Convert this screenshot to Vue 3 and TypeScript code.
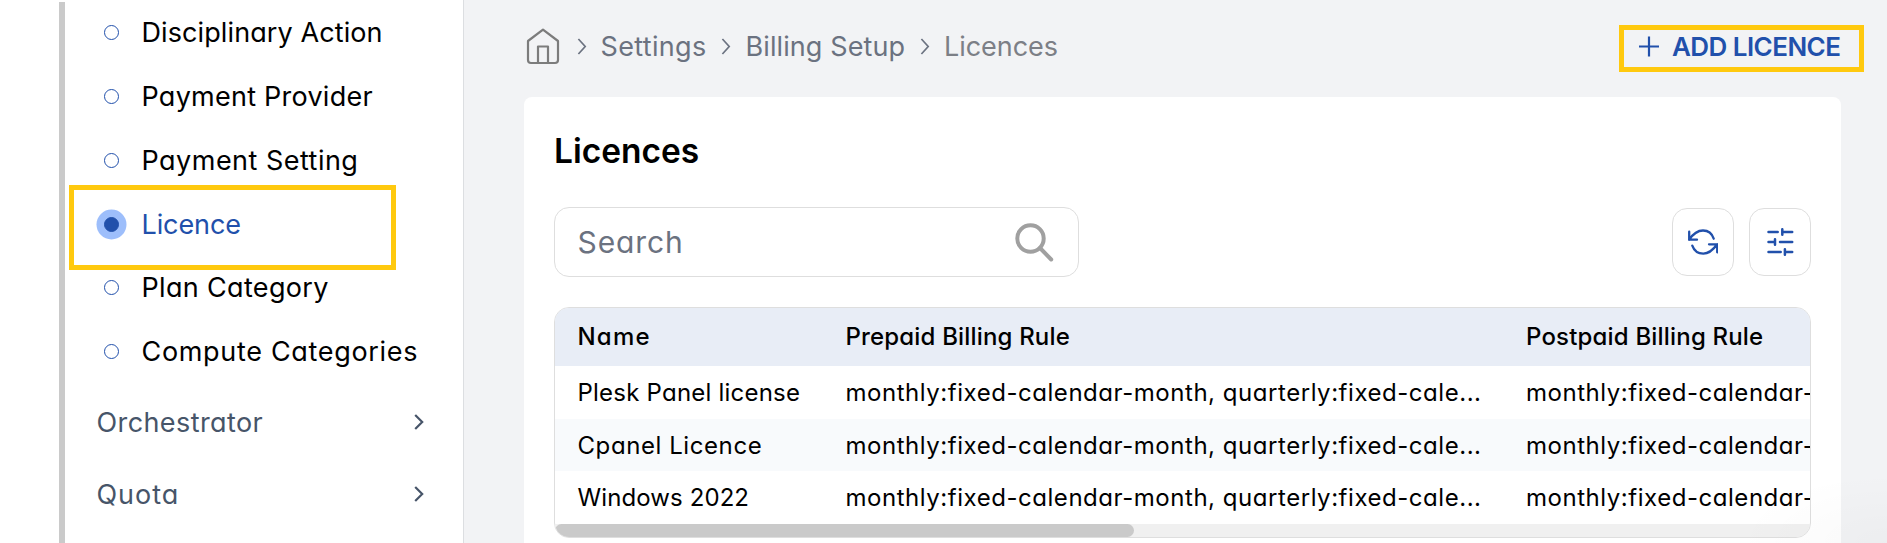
<script setup lang="ts">
interface Label {
  text: string
  spacing: number
}

interface MenuEntry extends Label {
  active?: boolean
}

interface LicenceRow {
  name: Label
  prepaid: string
  postpaid: string
}

const entries: MenuEntry[] = [
  { text: 'Disciplinary Action', spacing: 0.1 },
  { text: 'Payment Provider', spacing: 0.25 },
  { text: 'Payment Setting', spacing: 0.48 },
  { text: 'Licence', spacing: -0.1, active: true },
  { text: 'Plan Category', spacing: 0.33 },
  { text: 'Compute Categories', spacing: 0.68 },
]

const groups: Label[] = [
  { text: 'Orchestrator', spacing: 0.4 },
  { text: 'Quota', spacing: 0.95 },
]

const crumbs: Label[] = [
  { text: 'Settings', spacing: 0.33 },
  { text: 'Billing Setup', spacing: 0.1 },
  { text: 'Licences', spacing: -0.05 },
]

const columns: Label[] = [
  { text: 'Name', spacing: 1.2 },
  { text: 'Prepaid Billing Rule', spacing: 0.17 },
  { text: 'Postpaid Billing Rule', spacing: 0.18 },
]

const rule = 'monthly:fixed-calendar-month, quarterly:fixed-cale...'

const rows: LicenceRow[] = [
  { name: { text: 'Plesk Panel license', spacing: 0.22 }, prepaid: rule, postpaid: rule },
  { name: { text: 'Cpanel Licence', spacing: 0.58 }, prepaid: rule, postpaid: rule },
  { name: { text: 'Windows 2022', spacing: 0.1 }, prepaid: rule, postpaid: rule },
]

const track = (label: Label) => ({ letterSpacing: `${label.spacing}px` })
</script>

<template>
  <div class="page">
    <aside class="sidebar">
      <div class="rail"></div>
      <nav class="menu">
        <a v-for="entry in entries" :key="entry.text" class="entry" :class="{ active: entry.active }">
          <span class="bullet"></span>
          <span class="entry-text" :style="track(entry)">{{ entry.text }}</span>
          <span v-if="entry.active" class="marker"></span>
        </a>
        <div class="groups">
          <a v-for="group in groups" :key="group.text" class="group">
            <span :style="track(group)">{{ group.text }}</span>
            <svg class="group-arrow" viewBox="0 0 10 16"><path d="M1.2 1l7 7-7 7" /></svg>
          </a>
        </div>
      </nav>
    </aside>

    <main class="main">
      <header class="topbar">
        <div class="crumbs">
          <svg class="home" viewBox="0 0 34 37">
            <path d="M17 1.600L2 13V32a3 3 0 0 0 3 3h24a3 3 0 0 0 3-3V13z" />
            <path d="M12 35V18.500h10V35" />
          </svg>
          <template v-for="crumb in crumbs" :key="crumb.text">
            <svg class="crumb-arrow" viewBox="0 0 10 17"><path d="M1.400 1l6.800 7.500-6.800 7.500" /></svg>
            <span class="crumb" :style="track(crumb)">{{ crumb.text }}</span>
          </template>
        </div>
        <button class="add">
          <svg class="plus" viewBox="0 0 20 21"><path d="M0 10.500h20M10 .5v20" /></svg>
          <span class="add-text">ADD LICENCE</span>
        </button>
      </header>

      <section class="card">
        <h1 class="title">Licences</h1>
        <div class="tools">
          <div class="search">
            <span class="placeholder">Search</span>
            <svg class="lens" viewBox="0 0 40 40">
              <circle cx="16.500" cy="16.500" r="13.200" />
              <path d="M26 26l11.200 11.500" />
            </svg>
          </div>
          <div class="actions">
            <button class="tool">
              <svg class="refresh" viewBox="0 0 30 26">
                <path d="M1.200 2.700v8H9M1.200 10.700C5 5 9.500 1.500 15 1.500c5 0 9 3 10.700 8.200" />
                <path d="M21 15.300h8.200v8M29.200 15.300C25 21 20.500 24.700 15.300 24.700c-5 0-9.300-3.200-11-8" />
              </svg>
            </button>
            <button class="tool">
              <svg class="sliders" viewBox="0 0 28 28">
                <path d="M2.500 4h9.200M17 4h9.200M16.300 1.200v5.600" />
                <path d="M2.500 14H9M14 14h12.200M9 11.200v5.600" />
                <path d="M2.500 24h12.200M19 24h7.200M18.900 21.200v5.600" />
              </svg>
            </button>
          </div>
        </div>

        <div class="table">
          <div class="row head">
            <span v-for="column in columns" :key="column.text" :style="track(column)">{{ column.text }}</span>
          </div>
          <div v-for="row in rows" :key="row.name.text" class="row">
            <span :style="track(row.name)">{{ row.name.text }}</span>
            <span class="rule">{{ row.prepaid }}</span>
            <span class="rule">{{ row.postpaid }}</span>
          </div>
          <div class="scroll"><div class="thumb"></div></div>
        </div>
      </section>
      <div class="glow"></div>
    </main>
  </div>
</template>

<style>
body {
  margin: 0;
}
</style>

<style scoped>
.page {
  display: flex;
  width: 1887px;
  height: 543px;
  overflow: hidden;
  background: #fff;
  font-family: Inter, "Open Sans", sans-serif;
  font-feature-settings: "cv11";
  color: #000;
  white-space: nowrap;
}

.page * {
  box-sizing: border-box;
}

button {
  padding: 0;
  background: none;
  font: inherit;
  font-feature-settings: inherit;
}

svg {
  display: block;
  flex: none;
  fill: none;
  stroke: currentColor;
}

.sidebar {
  display: flex;
  flex: none;
  width: 464px;
  padding-left: 59px;
  border-right: 1px solid #dcdee1;
  font-size: 27px;
}

.rail {
  width: 6px;
  margin-top: 2px;
  background: #cacaca;
}

.menu {
  flex: 1;
}

.entry {
  position: relative;
  display: flex;
  align-items: center;
  height: 64px;
  padding-left: 39px;
}

.bullet {
  width: 15px;
  height: 15px;
  margin-right: 22.500px;
  border: 1px solid #2150ab;
  border-radius: 50%;
}

.active {
  height: 65px;
  margin-bottom: -2px;
  color: #2150ab;
}

.active .bullet {
  background: #2150ab;
  box-shadow: 0 0 0 7.500px #9dbefb;
}

.marker {
  position: absolute;
  top: -7px;
  left: 4px;
  width: 327px;
  height: 85px;
  border: 5px solid #ffc90e;
}

.groups {
  padding-top: 3px;
}

.group {
  display: flex;
  align-items: center;
  justify-content: space-between;
  height: 72px;
  padding: 0 39px 0 31.500px;
  color: #475569;
}

.group-arrow {
  width: 10px;
  height: 16px;
  stroke-width: 2.200;
}

.main {
  position: relative;
  flex: 1;
  min-width: 0;
  padding-left: 60px;
  background: #f2f3f5;
}

.topbar {
  display: flex;
  align-items: center;
  justify-content: space-between;
  height: 97px;
  padding: 0 23px 0 2px;
  font-size: 27px;
}

.crumbs {
  display: grid;
  grid-template-columns: 51px 23.500px 120px 25px 174.500px 24px auto;
  align-items: center;
  height: 47px;
  margin-top: -4px;
  color: #6b7280;
}

.home {
  width: 34px;
  height: 37px;
  stroke: #7c7c7c;
  stroke-width: 2.200;
  stroke-linejoin: round;
}

.crumb-arrow {
  width: 10px;
  height: 17px;
  stroke-width: 1.700;
}

.crumb:last-child {
  color: #7c7f86;
}

.add {
  display: flex;
  align-items: center;
  width: 245px;
  height: 47px;
  padding-left: 15px;
  border: 5px solid #ffc90e;
  color: #2150ab;
  font-size: 26px;
  font-weight: 600;
  letter-spacing: -0.550px;
}

.plus {
  width: 20px;
  height: 21px;
  margin: 0 13px 4px 0;
  stroke-width: 2.200;
}

.add-text {
  padding-bottom: 4px;
}

.card {
  width: 1317px;
  height: 460px;
  padding: 34px 30px 0;
  border-radius: 8px;
  background: #fff;
}

.title {
  margin: 0;
  font-size: 33.500px;
  font-weight: 600;
  line-height: 40px;
  letter-spacing: 0;
}

.tools {
  display: flex;
  align-items: center;
  justify-content: space-between;
  height: 70px;
  margin-top: 36px;
}

.search {
  display: flex;
  align-items: center;
  justify-content: space-between;
  width: 525px;
  height: 70px;
  padding: 0 24px 0 22.500px;
  border: 1px solid #dedede;
  border-radius: 15px;
}

.placeholder {
  color: #6b7280;
  font-size: 30px;
  letter-spacing: 0.900px;
}

.lens {
  width: 40px;
  height: 40px;
  stroke: #a0a0a0;
  stroke-width: 4;
  stroke-linecap: round;
}

.actions {
  display: flex;
  gap: 15px;
}

.tool {
  display: grid;
  place-items: center;
  width: 62px;
  height: 68px;
  border: 1px solid #dedede;
  border-radius: 15px;
  color: #2150ab;
}

.refresh {
  width: 30px;
  height: 26px;
  stroke-width: 2.300;
  stroke-linecap: round;
  stroke-linejoin: round;
}

.sliders {
  width: 28px;
  height: 28px;
  stroke-width: 2.500;
  stroke-linecap: round;
}

.table {
  height: 231px;
  margin-top: 30px;
  border: 1px solid #dedede;
  border-radius: 15px;
  overflow: hidden;
}

.row {
  display: grid;
  grid-template-columns: 268px 680.500px 700px;
  align-items: center;
  height: 52.600px;
  padding-left: 22.500px;
  font-size: 24px;
}

.row:nth-child(odd):not(.head) {
  background: #f8fafc;
}

.head {
  height: 58.200px;
  padding-bottom: 2px;
  background: #e8edf6;
  font-weight: 500;
}

.rule {
  letter-spacing: 0.540px;
}

.scroll {
  height: 13px;
  background: #f0f0f0;
}

.thumb {
  width: 579px;
  height: 13px;
  border-radius: 7px;
  background: #cacaca;
}

.glow {
  position: absolute;
  right: 0;
  bottom: 0;
  width: 150px;
  height: 70px;
  background: radial-gradient(ellipse 150px 70px at 100% 100%, rgba(0, 0, 0, 0.025), transparent);
}
</style>
